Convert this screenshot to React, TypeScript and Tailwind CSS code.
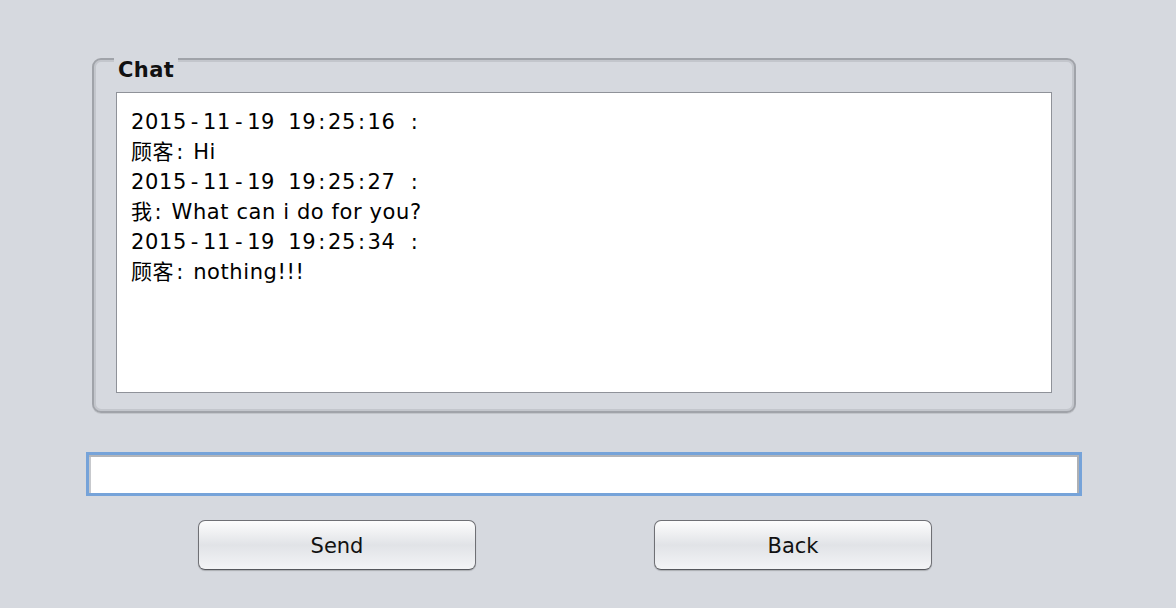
type Line = { text: string; stamp?: boolean };

const lines: Line[] = [
  { text: "2015-11-19 19:25:16 :", stamp: true },
  { text: "顾客: Hi" },
  { text: "2015-11-19 19:25:27 :", stamp: true },
  { text: "我: What can i do for you?" },
  { text: "2015-11-19 19:25:34 :", stamp: true },
  { text: "顾客: nothing!!!" },
];

const font = {
  fontFamily: '"DejaVu Sans", "Noto Sans CJK SC", sans-serif',
};

// the old swing font sets ':' and '-' wider than DejaVu does
function Spaced({ text }: { text: string }) {
  return (
    <>
      {text.split(/([:-])/).map((part, i) =>
        part === ":" ? (
          <span key={i} className="px-[2px]">:</span>
        ) : part === "-" ? (
          <span key={i} className="px-[4px]">-</span>
        ) : (
          <span key={i}>{part}</span>
        )
      )}
    </>
  );
}

function AquaButton({ label }: { label: string }) {
  return (
    <button
      className="h-[50px] w-[278px] rounded-[7px] border border-[#6f7075] border-b-[#55575c] bg-gradient-to-b from-[#fdfdfd] via-[#e1e3e7] to-[#f3f4f6] pt-[3px] text-[21px] text-[#111] shadow-[0_1px_1px_rgba(0,0,0,0.2)]"
      style={font}
    >
      {label}
    </button>
  );
}

export default function App() {
  return (
    <div className="h-[608px] w-[1176px] overflow-hidden bg-[#d6d9df]" style={font}>
      <div className="pt-[58px] pl-[92px]">
        <div className="relative h-[355px] w-[984px] rounded-[9px] border-2 border-[#a0a3a9] px-[22px] pt-[32px] pb-[18px] shadow-[inset_0_0_0_2px_#c3c6cc,0_1px_0_#c2c5ca]">
          <div className="absolute -top-[2px] left-[20px] bg-[#d6d9df] px-[4px] text-[21px] font-bold leading-[24px] tracking-[0.4px] text-[#111]">
            Chat
          </div>
          <div className="h-full w-full border border-[#8f9299] bg-white px-[14px] pt-[14px]">
            {lines.map((l, i) => (
              <div
                key={i}
                className={
                  l.stamp
                    ? "h-[30px] whitespace-pre text-[21px] leading-[30px] tracking-[0.6px] text-black [word-spacing:6px]"
                    : "h-[30px] whitespace-pre text-[21px] leading-[30px] tracking-[0.6px] text-black"
                }
              >
                <Spaced text={l.text} />
              </div>
            ))}
          </div>
        </div>
      </div>

      <div className="mt-[39px] ml-[86px] h-[44px] w-[996px] border-[3px] border-[#76a3d9] bg-white shadow-[inset_0_2px_0_#b3b5b9,inset_2px_0_0_#c7c9cd,inset_-2px_0_0_#aeb0b4]" />

      <div className="mt-[24px] flex">
        <div className="ml-[198px]">
          <AquaButton label="Send" />
        </div>
        <div className="ml-[178px]">
          <AquaButton label="Back" />
        </div>
      </div>
    </div>
  );
}
